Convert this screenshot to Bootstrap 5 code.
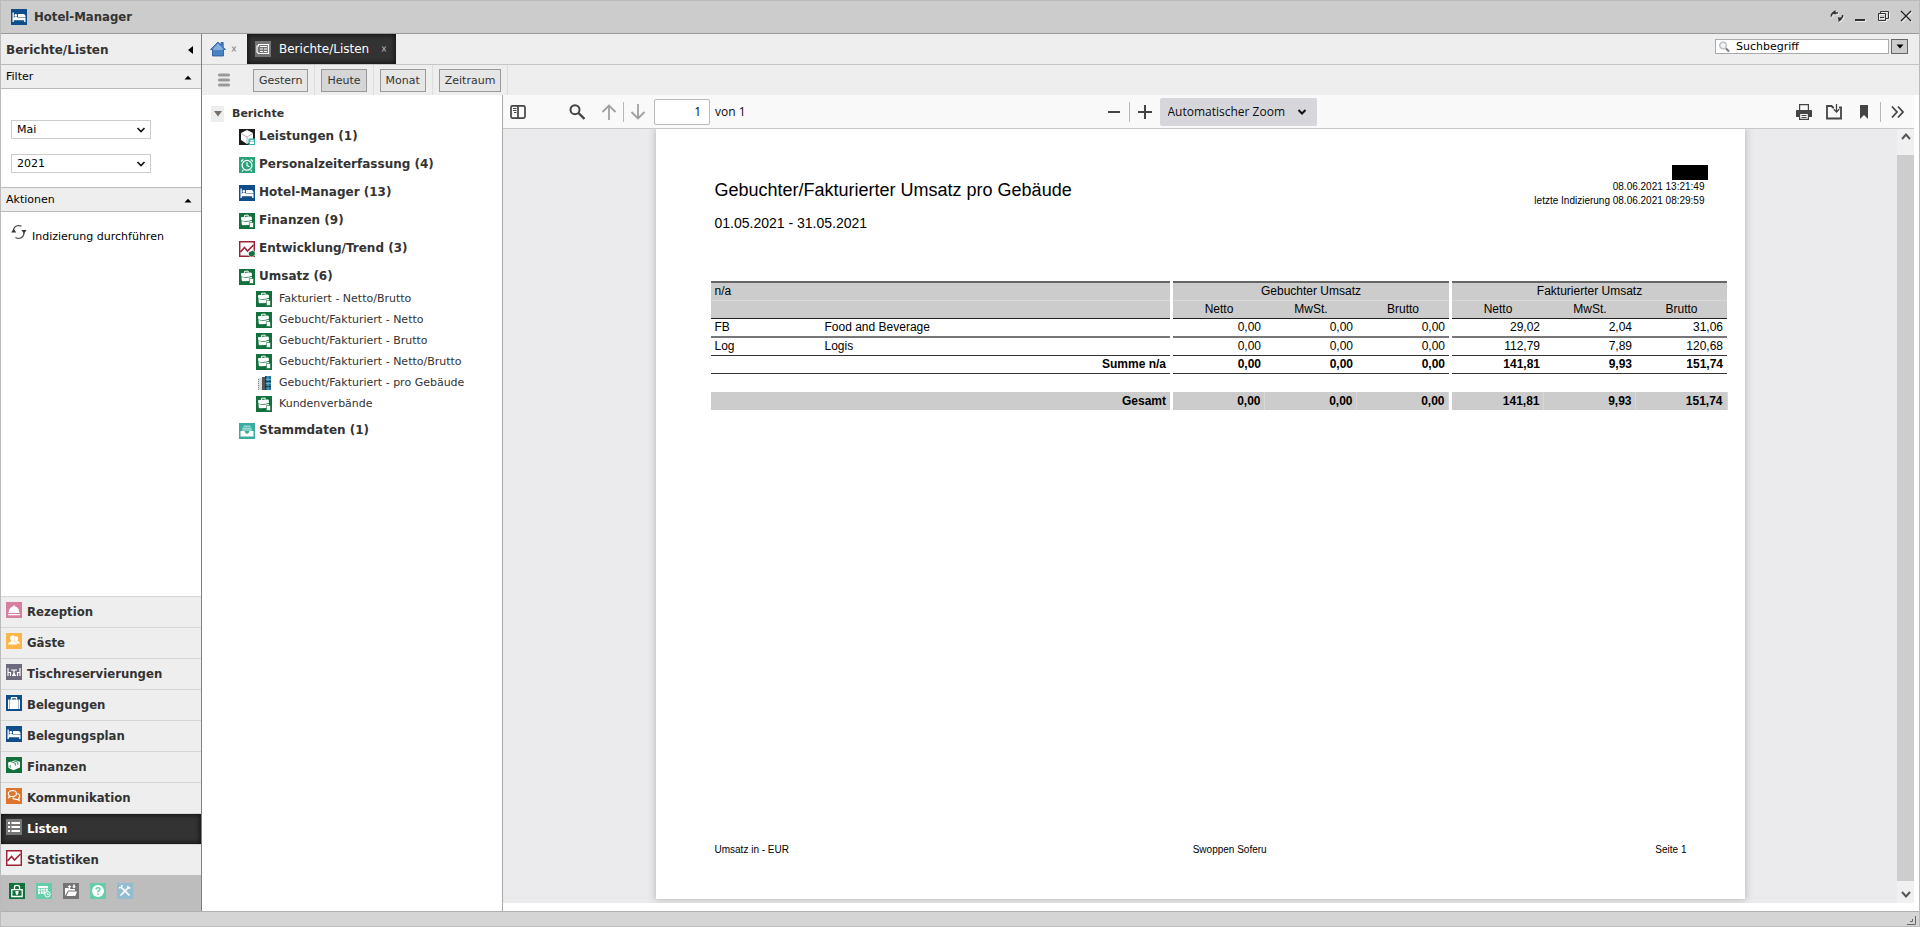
<!DOCTYPE html>
<html lang="de">
<head>
<meta charset="utf-8">
<meta name="viewport" content="width=device-width, initial-scale=1">
<title>Hotel-Manager</title>
<link href="https://cdn.jsdelivr.net/npm/bootstrap@5.3.0/dist/css/bootstrap.min.css" rel="stylesheet">
<style>
  body { font: 11px/14px "DejaVu Sans", sans-serif; color: #000; background: #fff; }
  a { color: inherit; text-decoration: none; }
  button { font: inherit; color: inherit; background: none; border: 0; padding: 0; line-height: 0; }
  svg { display: block; flex: none; }
  .window { height: 100vh; border: 1px solid #bbb; }
  .fill { min-width: 0; min-height: 0; }
  .ico { width: 16px; height: 16px; }

  .titlebar { height: 33px; background: #ccc; border-bottom: 1px solid #999; padding: 0 6px 0 10px; gap: 7px; }
  .titlebar h1, .module { font: bold 13px/16px "DejaVu Sans Condensed", "DejaVu Sans", sans-serif; font-stretch: condensed; color: #333; }
  .titlebar button svg { filter: drop-shadow(1px 1px 0 #eee); }
  .window-tools { gap: 9px; padding-bottom: 3px; }

  .sidebar { width: 201px; flex: none; border-right: 1px solid #808080; }
  .side-title { height: 31px; background: #eee; border-bottom: 1px solid #bbb; padding: 2px 8px 0 5px; font-weight: bold; font-size: 12px; color: #333; }
  .side-head { height: 24px; background: #eee; border-bottom: 1px solid #bbb; padding: 1px 9px 0 5px; }
  .filter { padding: 31px 10px 14px; gap: 15px; border-bottom: 1px solid #bbb; }
  .filter .form-select { width: 140px; height: 19px; padding: 0 20px 0 5px; font-size: 11px; line-height: 14px; color: #000; border: 1px solid #ccc; border-radius: 0;
    background: #fff url("data:image/svg+xml,%3Csvg xmlns='http://www.w3.org/2000/svg' viewBox='0 0 10 8'%3E%3Cpath d='M1.500 2 5 5.500 8.500 2' fill='none' stroke='%23111' stroke-width='1.600'/%3E%3C/svg%3E") no-repeat right 4px center / 10px 8px; }
  .action { padding: 4px 0 0 2px; gap: 5px; }
  .action span { padding-top: 6px; }
  .module { height: 31px; background: #eee; border-top: 1px solid #d6d6d6; padding: 5px 5px 8px; gap: 5px; }
  .module span { padding-top: 2px; }
  .module.active { background: #333; color: #fff; box-shadow: inset 0 0 5px 1px #111; }
  .quickbar { height: 36px; background: #bdbdbd; padding: 8px; gap: 11px; }

  .tabstrip { height: 31px; background: #eee; border-bottom: 1px solid #c6c6c6; }
  .tab-home { padding: 0 9px 0 8px; gap: 4px; }
  .tab-open { height: 30px; width: 149px; background: #333; color: #fff; padding: 0 8px; box-shadow: inset 0 0 5px 1px #111; }
  .tab-open a { font-size: 12px; }
  .search { padding: 5px 11px 0 0; gap: 2px; }
  .find { width: 174px; height: 15px; border: 1px solid #aaa; background: #fff; padding: 0 2px; gap: 6px; }
  .find input { font-size: 11px; line-height: 13px; color: #000; border: 0; padding: 0; height: 13px; outline: 0; }
  .find input::placeholder { color: #000; opacity: 1; }
  .find-menu { width: 17px; height: 15px; background: #ccc; border: 1px solid #666; }

  .rangebar { height: 30px; background: #eee; padding-left: 16px; gap: 17px; }
  .range { padding: 1px 6px 0; border-right: 1px solid #ddd; }
  .range button { height: 23px; padding: 0 5px; border: 1px solid #999; background: #e6e6e6; color: #333; line-height: 21px; }
  .range button.on { background: #d6d6d6; }

  .tree { width: 301px; flex: none; border-right: 1px solid #aaa; color: #333; padding: 10px 0 0 9px; }
  .tree ul { list-style: none; margin: 0; padding: 0; }
  .tree-root { gap: 8px; font-weight: bold; height: 18px; }
  .twisty { width: 13px; height: 16px; background: #eee; }
  .tree .branches { padding-left: 28px; }
  .branch { height: 28px; gap: 4px; padding-top: 6px; font-size: 12px; font-weight: bold; }
  .leaf { height: 21px; gap: 7px; padding: 0 0 0 17px; }
  .leaf span { padding-top: 1px; }

  .viewer-bar { height: 34px; margin-right: 5px; background: #f9f9fa; border-bottom: 1px solid #c8c8c8; font: 12px/16px "Open Sans", sans-serif; color: #0c0c0d; padding: 0 9px 0 7px; }
  .tools { flex: 1 1 0; }
  .tools-nav { gap: 6px; margin-left: 16px; }
  .find-tool { margin-left: 43px; }
  .tools-file { gap: 14px; }
  .rule { width: 1px; height: 20px; background: #b8b8b8; }
  .page-field { gap: 5px; padding-left: 2px; }
  .page-no { width: 56px; height: 26px; border: 1px solid #bbb; border-radius: 2px; text-align: right; padding: 0 8px; background: #fff; }
  .zoom-select { appearance: none; width: 157px; height: 28px; border: 0; border-radius: 2px; padding: 0 20px 0 8px; font: inherit; color: inherit;
    background: #d7d7db url("data:image/svg+xml,%3Csvg xmlns='http://www.w3.org/2000/svg' viewBox='0 0 10 8'%3E%3Cpath d='M1.500 2 5 5.500 8.500 2' fill='none' stroke='%23111' stroke-width='2'/%3E%3C/svg%3E") no-repeat right 10px center / 10px 8px; }
  .viewer-body { background: #ebebed; }
  .sheet { width: 80%; max-width: 1089px; height: 770px; background: #fff; box-shadow: 0 0 7px 1px #bbb; font: 12px/18px "Liberation Sans", sans-serif; color: #000; padding: 36px 17px 42px 55px; }
  .sheet-head { padding: 0 20px 0 4px; height: 116px; }
  .sheet h2 { font-size: 18px; line-height: 22px; font-weight: normal; margin: 14px 0 13px; }
  .period { font-size: 14px; line-height: 18px; }
  .stamp { font-size: 10px; line-height: 14px; text-align: right; padding-right: 3px; }
  .redact { width: 36px; height: 15px; background: #000; }
  .report { width: 100%; table-layout: fixed; border-collapse: collapse; }
  .report td, .report th { height: 18px; line-height: 16px; padding: 0 4px; font-weight: normal; }
  .report .num { text-align: right; }
  .report thead th { background: #ccc; }
  .report thead tr:first-child th { border-top: 2px solid #666; border-bottom: 1px solid #d8d8d8; }
  .report thead tr:last-child th { border-bottom: 1px solid #222; }
  .report tbody td { border-bottom: 1px solid #333; }
  .report tbody tr:first-child td { border-bottom: 2px solid #777; height: 19px; }
  .report .sum td { font-weight: bold; }
  .report tbody .blank td { border: 0; height: 19px; }
  .report .total td { background: #ccc; border: 0; font-weight: bold; }
  .report .total td + td { border-right: 1px solid #d8d8d8; }
  .report tr .gap { background: #fff !important; border: 0 !important; padding: 0; }
  .sheet-foot { display: grid; grid-template-columns: 34fr 38fr 28fr; font-size: 10px; line-height: 14px; padding: 0 41px 0 4px; }

  .scroller { width: 17px; flex: none; background: #f0f0f0; }
  .scroller button { height: 26px; display: flex; justify-content: center; }
  .scroller .down { height: 22px; align-items: flex-end; }
  .thumb { background: #cdcdcd; }
  .margin-strip { width: 5px; background: #fff; }
  .statusbar { height: 15px; background: #d5d5d5; border-top: 1px solid #b0b0b0; padding: 0 2px; }
</style>
<script src="https://cdn.jsdelivr.net/npm/bootstrap@5.3.0/dist/js/bootstrap.bundle.min.js"></script>
</head>
<body>
<svg width="0" height="0" class="position-absolute" aria-hidden="true">
  <symbol id="bed" viewBox="0 0 16 16"><path fill="#104e8b" d="M0 0h16v16H0z"/><path fill="#fff" d="M1.500 3.500h1.300V9H14.500v4h-1.300v-1.700H2.800V13H1.500z"/><circle cx="4.800" cy="6.400" r="1.400" fill="#fff"/><path fill="#fff" d="M7 5h5.500q2 .3 2 2.200V8.500H7zM3.200 8h3.500v1H3.200z"/></symbol>
  <symbol id="case" viewBox="0 0 16 16"><path fill="#11703c" d="M0 0h16v16H0z"/><path fill="#fff" d="M2 4.800Q2 4 3 3.900L11.500 3.400q1.200 0 1.300.9l.2 2.400Q8 9 2.300 7.400zM2.500 8Q7.500 9.400 12.800 7.700L13 9.500 10 12l-6.200.2q-1 0-1.100-1z"/><path d="M5.500 3.800V2.300L9.200 2.100v1.500" fill="none" stroke="#fff"/><path fill="#fff" stroke="#11703c" stroke-width=".6" d="M10.400 9.500h4.100v5h-4.100z"/></symbol>
  <symbol id="cube" viewBox="0 0 16 16"><path fill="#1b1b1b" d="M0 0h16v16H0z"/><path fill="#fff" d="m8 1 6 3v7l-6 4-6-4V4z"/><path fill="none" stroke="#999" stroke-width=".7" d="M2 4.500 8 8l6-3.500M8 8v6"/><path fill="#37b5a5" d="M9.500 9.500H16V16H9.500z"/><path fill="#fff" d="M11 12.500h4V15h-4zM11.500 11h3v1h-3z"/></symbol>
  <symbol id="clock" viewBox="0 0 16 16"><path fill="#2aa37a" d="M0 0h16v16H0z"/><circle cx="8" cy="8.300" r="4.900" fill="none" stroke="#fff" stroke-width="1.300"/><path fill="none" stroke="#fff" stroke-width="1.200" d="M8 5.300v3.200l2.500 1.200M2.200 4.500l2-2.200M13.800 4.500l-2-2.200M4.200 13l-1 1.500M11.800 13l1 1.500"/></symbol>
  <symbol id="trend" viewBox="0 0 16 16"><path fill="#fff" stroke="#9c2235" stroke-width="1.500" d="M.7.7h14.600v14.600H.7z"/><path fill="none" stroke="#9c2235" stroke-width="1.600" d="m1.500 11 4-4.500 3 3.500 6-6"/></symbol>
  <symbol id="tray" viewBox="0 0 16 16"><path fill="#3aada2" d="M0 0h16v16H0z"/><path fill="none" stroke="#c8efe9" d="M4.500 3.200h7M3.500 5.200h9M3 7h10"/><path fill="#fff" d="M1.500 8h4q1 3 2.500 3t2.500-3h4v5.500h-13z"/></symbol>
  <symbol id="tower" viewBox="0 0 16 16"><path fill="#ddd" d="M2 3h5v12H2z"/><path stroke="#888" stroke-dasharray="1 1" d="M2.500 4v11"/><path fill="#555" d="M6 2h3v13H6z"/><path fill="#227397" d="M9 1h6v14H9z"/><path stroke="#7cc3df" stroke-width=".7" d="M9 4.500h6M9 8.500h6M12 1v14"/><path stroke="#123" stroke-width=".7" d="M9.500 1v14M9 6.500h6M9 11.500h6"/></symbol>
  <symbol id="up" viewBox="0 0 8 5"><path d="M.5 4.500h7L4 .7z"/></symbol>
  <symbol id="close" viewBox="0 0 8 8"><path d="M1.500 1.500h1.600L4 3l1-1.500h1.500L4.800 4l1.700 2.500H5L4 5 3 6.500H1.400L3.200 4z" fill="#999"/></symbol>
</svg>

<div class="window d-flex flex-column overflow-hidden">
  <header class="titlebar d-flex align-items-center">
    <svg class="ico"><use href="#bed"/></svg>
    <h1 class="m-0 flex-grow-1">Hotel-Manager</h1>
    <div class="window-tools d-flex align-items-center">
      <button type="button" aria-label="Neu laden"><svg width="14" height="14" viewBox="0 0 14 14"><path d="M1.500 7.500Q.8 4 5 4h3M12.500 6Q13.200 9.500 9 9.500H8" fill="none" stroke="#333" stroke-width="1.600"/><path fill="#333" d="M2 3.500 5.500 1v5zM12 10.500 8.500 13V8z"/></svg></button>
      <button type="button" aria-label="Minimieren"><svg width="14" height="14" viewBox="0 0 14 14"><path fill="#333" d="M2 10h10v2H2z"/></svg></button>
      <button type="button" aria-label="Wiederherstellen"><svg width="14" height="14" viewBox="0 0 14 14"><path fill="none" stroke="#333" d="M4.500 4V2.500h8v7H10M2.500 4.500h7v7h-7zM4 8.500h4"/></svg></button>
      <button type="button" aria-label="Schließen"><svg width="14" height="14" viewBox="0 0 14 14"><path stroke="#222" stroke-width="1.300" d="m2 2 10 10M12 2 2 12"/></svg></button>
    </div>
  </header>

  <div class="fill d-flex flex-grow-1">
    <aside class="sidebar d-flex flex-column">
      <div class="side-title d-flex align-items-center justify-content-between">Berichte/Listen
        <button type="button" aria-label="Einklappen"><svg width="5" height="8" viewBox="0 0 5 8"><path d="M5 0v8L0 4z"/></svg></button></div>
      <div class="side-head d-flex align-items-center justify-content-between">Filter <svg width="8" height="5"><use href="#up"/></svg></div>
      <form class="filter d-flex flex-column">
        <select class="form-select" aria-label="Monat"><option>Mai</option></select>
        <select class="form-select" aria-label="Jahr"><option>2021</option></select>
      </form>
      <div class="side-head d-flex align-items-center justify-content-between">Aktionen <svg width="8" height="5"><use href="#up"/></svg></div>
      <div class="flex-grow-1 p-2">
        <a href="#" class="action d-flex"><svg width="16" height="16" viewBox="0 0 16 16"><path fill="none" stroke="#444" stroke-width="1.200" d="M2.500 7Q2.500 2 7.500 1.500l3 .7M13 8.500q0 5-5 6-2 0-3.500-1"/><path fill="#333" d="M.3 8.500h5L2.500 4.800zM10.500 6h5L13 9.800z"/></svg><span>Indizierung durchführen</span></a>
      </div>
      <nav>
        <a href="#" class="module d-flex"><svg class="ico" viewBox="0 0 16 16"><path fill="#d77fa1" d="M0 0h16v16H0z"/><path fill="#fff" d="M2.500 11q.5-6 5-6.800V3h1v1.200q4.500.8 5 6.800zM2 12h12v1.300H2z"/></svg><span>Rezeption</span></a>
        <a href="#" class="module d-flex"><svg class="ico" viewBox="0 0 16 16"><path fill="#fdb549" d="M0 0h16v16H0z"/><path fill="#fff" d="M4.300 5.500a2.300 2.600 0 1 1 4.400 0q0 2-1 2.900 3.300 1 3.300 3.100H2q0-2.300 3.300-3.100-1-1-1-2.900z"/><path fill="#fff" d="M8.500 3.500q3.500-1.200 3.800 1.800 0 2-1 2.800 2.700.8 2.700 2.600h-2.500Q11 9.300 8.500 8.200z"/></svg><span>Gäste</span></a>
        <a href="#" class="module d-flex"><svg class="ico" viewBox="0 0 16 16"><path fill="#6c6a7c" d="M0 0h16v16H0z"/><path fill="none" stroke="#fff" stroke-width="1.200" d="M2 4v8M2 8.500h2.500V12M14 4v8M14 8.500h-2.500V12M5 6h6M8 6v6M6.500 12l1.500-3 1.500 3"/></svg><span>Tischreservierungen</span></a>
        <a href="#" class="module d-flex"><svg class="ico" viewBox="0 0 16 16"><path fill="#104e8b" d="M0 0h16v16H0z"/><path fill="#fff" d="M4 4.500h8V14H4zM2 5q0-.5.500-.500H3.600V14H2.500Q2 14 2 13.500zM14 5q0-.5-.5-.5H12.400V14h1.100q.5 0 .5-.5z"/><path fill="none" stroke="#fff" stroke-width="1.200" d="M5.500 4.500V2.600h5v1.900"/></svg><span>Belegungen</span></a>
        <a href="#" class="module d-flex"><svg class="ico"><use href="#bed"/></svg><span>Belegungsplan</span></a>
        <a href="#" class="module d-flex"><svg class="ico" viewBox="0 0 16 16"><path fill="#11703c" d="M0 0h16v16H0z"/><path fill="#fff" d="m2 5.500 7-2.300 5 1.500v5.800l-6.500 2.700L2.500 11z"/><path fill="none" stroke="#11703c" stroke-width=".8" d="m5 4.700 4.300 1.500v2.500M7.500 3.800l4.300 1.400v2.600M4.500 8q-1 1 0 2.500"/></svg><span>Finanzen</span></a>
        <a href="#" class="module d-flex"><svg class="ico" viewBox="0 0 16 16"><path fill="#e0742b" d="M0 0h16v16H0z"/><path fill="none" stroke="#fff" stroke-width="1.200" d="M6.500 2.500q4 .3 4 3t-4 3q-.8 0-1.500-.2L2.800 9.500l.5-2Q2.200 6.500 2.300 5.300q.4-2.600 4.200-2.800zM11.500 5.500q2.200.8 2.200 2.700 0 1.300-1 2l.5 2.300-2.500-1.200Q7.500 11.600 6.500 9.500"/></svg><span>Kommunikation</span></a>
        <a href="#" class="module active d-flex" aria-current="page"><svg class="ico" viewBox="0 0 16 16"><path fill="#777" d="M0 0h16v16H0z"/><path fill="#fff" d="M2 3h2v2H2zM5.500 3H14v2H5.500zM2 7h2v2H2zM5.500 7H14v2H5.500zM2 11h2v2H2zM5.500 11H14v2H5.500z"/></svg><span>Listen</span></a>
        <a href="#" class="module d-flex"><svg class="ico"><use href="#trend"/></svg><span>Statistiken</span></a>
      </nav>
      <div class="quickbar d-flex">
        <button type="button" class="ico" aria-label="Sperren"><svg class="ico" viewBox="0 0 16 16"><path fill="#11703c" d="M0 0h16v16H0z"/><path fill="none" stroke="#fff" stroke-width="1.300" d="M5.500 6.500V3.700Q5.500 2.300 8 2.300t2.500 1.400v2.800M2.800 6.700h10.400v6.800H2.800z"/><path fill="#fff" d="M6.500 8h3v2l-1 2h-1l-1-2z"/></svg></button>
        <button type="button" class="ico" aria-label="Kalender"><svg class="ico" viewBox="0 0 16 16"><path fill="#66cdaa" d="M0 0h16v16H0z"/><path fill="#fff" d="M2 3h10v8H2z"/><path stroke="#66cdaa" stroke-width=".7" d="M2 5.500h10M2 8h10M4.500 5v6M7 5v6M9.500 5v6"/><circle cx="11.500" cy="11.300" r="2.700" fill="#66cdaa" stroke="#fff"/><path fill="none" stroke="#fff" stroke-width=".8" d="M11.500 10v1.500H13"/></svg></button>
        <button type="button" class="ico" aria-label="Ordner"><svg class="ico" viewBox="0 0 16 16"><path fill="#747474" d="M0 0h16v16H0z"/><path fill="#fff" d="M2 13V5h3l1 1h6v1.500H5zM5.500 8.500H14L12.300 13H3.500zM6.500 2l2 2H7.300v2H5.700V4H4.500zM11 5.500l-2-2h1.200v-2h1.600v2H13z"/></svg></button>
        <button type="button" class="ico" aria-label="Hilfe"><svg class="ico" viewBox="0 0 16 16"><path fill="#66cdaa" d="M0 0h16v16H0z"/><circle cx="8" cy="8" r="6" fill="#fff"/><path fill="none" stroke="#66cdaa" stroke-width="1.400" d="M6 6.500Q6 4.700 8 4.700t2 1.700Q10 7.500 8 8v1.500M8 10.500V12"/></svg></button>
        <button type="button" class="ico" aria-label="Werkzeuge"><svg class="ico" viewBox="0 0 16 16"><path fill="#93bccf" d="M0 0h16v16H0z"/><path fill="none" stroke="#fff" stroke-width="1.700" d="m4 4 8.500 8.500M12 4l-8.500 8.500"/><path fill="none" stroke="#fff" stroke-width="1.500" d="M2 4.500q2.500.8 3-2.500M11 3q-.5 2.500 2.500 2"/></svg></button>
      </div>
    </aside>

    <main class="fill d-flex flex-column flex-grow-1">
      <div class="tabstrip d-flex">
        <div class="tab-home d-flex align-items-center">
          <a href="#" aria-label="Start"><svg class="ico" viewBox="0 0 16 16"><path fill="#4a83c4" stroke="#24579a" stroke-width=".8" d="M8 1 11 4V1.500h2.200V6.200L15.500 8.500H13.500V15h-11V8.500H.5z"/><path fill="#9cc2ea" d="m8 2.500 4.500 4.700V9h-9V7.200z" opacity=".7"/></svg></a>
          <button type="button" aria-label="Start schließen"><svg width="8" height="8"><use href="#close"/></svg></button>
        </div>
        <div class="tab-open d-flex align-items-center">
          <svg class="ico" viewBox="0 0 16 16"><path fill="#747474" d="M0 0h16v16H0z"/><path fill="none" stroke="#fff" stroke-width="1.200" d="M3.500 3.500h10v9h-10L2 11V5h1.500z"/><path stroke="#fff" d="M5 5.500h7M5 8h3M9 8h3M5 10.500h3M9 10.500h3"/></svg>
          <a href="#" class="ms-2 flex-grow-1" aria-current="page">Berichte/Listen</a>
          <button type="button" aria-label="Tab schließen"><svg width="8" height="8"><use href="#close"/></svg></button>
        </div>
        <div class="search d-flex ms-auto">
          <label class="find d-flex align-items-center"><svg width="12" height="12" viewBox="0 0 12 12"><circle cx="5" cy="4.500" r="3.300" fill="#edf3f7" stroke="#bbb" stroke-width="1.300"/><path stroke="#777" stroke-width="2" d="m8 7.500 3 3"/></svg><input class="w-100" type="text" placeholder="Suchbegriff" aria-label="Suchbegriff"></label>
          <button type="button" class="find-menu d-flex align-items-center justify-content-center" aria-label="Suchoptionen"><svg width="8" height="5" viewBox="0 0 8 5"><path d="M.5.5h7L4 4.500z"/></svg></button>
        </div>
      </div>

      <div class="rangebar d-flex align-items-center">
        <button type="button" aria-label="Menü"><svg width="12" height="14" viewBox="0 0 12 14"><path stroke="#999" stroke-width="3" stroke-linecap="round" d="M1.500 2h9M1.500 7h9M1.500 12h9"/></svg></button>
        <div class="d-flex align-self-stretch">
          <div class="range d-flex align-items-center"><button type="button">Gestern</button></div>
          <div class="range d-flex align-items-center"><button type="button" class="on">Heute</button></div>
          <div class="range d-flex align-items-center"><button type="button">Monat</button></div>
          <div class="range d-flex align-items-center"><button type="button">Zeitraum</button></div>
        </div>
      </div>

      <div class="fill d-flex flex-grow-1">
        <nav class="tree">
          <div class="tree-root d-flex align-items-center"><button type="button" class="twisty d-flex align-items-center justify-content-center" aria-label="Berichte einklappen"><svg width="8" height="6" viewBox="0 0 8 6"><path fill="#777067" d="M0 0h8L4 5.500z"/></svg></button><a href="#">Berichte</a></div>
          <ul class="branches">
            <li><a href="#" class="branch d-flex"><svg class="ico"><use href="#cube"/></svg><span>Leistungen (1)</span></a></li>
            <li><a href="#" class="branch d-flex"><svg class="ico"><use href="#clock"/></svg><span>Personalzeiterfassung (4)</span></a></li>
            <li><a href="#" class="branch d-flex"><svg class="ico"><use href="#bed"/></svg><span>Hotel-Manager (13)</span></a></li>
            <li><a href="#" class="branch d-flex"><svg class="ico"><use href="#case"/></svg><span>Finanzen (9)</span></a></li>
            <li><a href="#" class="branch d-flex"><svg class="ico" viewBox="0 0 16 16"><use href="#trend"/><path fill="#11703c" stroke="#fff" stroke-width=".6" d="m9.500 11 4-1.500 2.500 1v4L12.500 16l-3-1.500z"/></svg><span>Entwicklung/Trend (3)</span></a></li>
            <li><a href="#" class="branch d-flex"><svg class="ico"><use href="#case"/></svg><span>Umsatz (6)</span></a>
              <ul>
                <li><a href="#" class="leaf d-flex"><svg class="ico"><use href="#case"/></svg><span>Fakturiert - Netto/Brutto</span></a></li>
                <li><a href="#" class="leaf d-flex"><svg class="ico"><use href="#case"/></svg><span>Gebucht/Fakturiert - Netto</span></a></li>
                <li><a href="#" class="leaf d-flex"><svg class="ico"><use href="#case"/></svg><span>Gebucht/Fakturiert - Brutto</span></a></li>
                <li><a href="#" class="leaf d-flex"><svg class="ico"><use href="#case"/></svg><span>Gebucht/Fakturiert - Netto/Brutto</span></a></li>
                <li><a href="#" class="leaf d-flex"><svg class="ico"><use href="#tower"/></svg><span>Gebucht/Fakturiert - pro Gebäude</span></a></li>
                <li><a href="#" class="leaf d-flex"><svg class="ico"><use href="#case"/></svg><span>Kundenverbände</span></a></li>
              </ul></li>
            <li><a href="#" class="branch d-flex"><svg class="ico"><use href="#tray"/></svg><span>Stammdaten (1)</span></a></li>
          </ul>
        </nav>

        <section class="fill d-flex flex-column flex-grow-1">
          <div class="viewer-bar d-flex align-items-center">
            <div class="tools d-flex align-items-center">
              <button type="button" aria-label="Seitenleiste"><svg class="ico" viewBox="0 0 16 16"><path fill="none" stroke="#444" stroke-width="1.700" d="M2.500 1.900h11q1.500 0 1.500 1.500v9.200q0 1.500-1.500 1.500h-11Q1 14.100 1 12.600V3.400q0-1.500 1.500-1.500zM8 2v12"/><path stroke="#444" d="M3 4.500h3.500M3 6.500h3.500M4 8.500h2.500"/></svg></button>
              <button type="button" class="find-tool" aria-label="Suchen"><svg class="ico" viewBox="0 0 16 16"><circle cx="6" cy="5.700" r="4.500" fill="none" stroke="#444" stroke-width="2"/><path stroke="#444" stroke-width="2.400" d="m9.500 9 6 6"/></svg></button>
              <div class="tools-nav d-flex align-items-center">
                <button type="button" aria-label="Vorherige Seite"><svg class="ico" viewBox="0 0 16 16"><path fill="none" stroke="#a0a0a0" stroke-width="1.800" d="M8 16V1.500M1.500 8 8 1.500 14.500 8"/></svg></button>
                <span class="rule"></span>
                <button type="button" aria-label="Nächste Seite"><svg class="ico" viewBox="0 0 16 16"><path fill="none" stroke="#a0a0a0" stroke-width="1.800" d="M8 0v14.500M1.500 8 8 14.500 14.500 8"/></svg></button>
                <div class="page-field d-flex align-items-center"><input class="page-no" id="pageNo" type="text" value="1"><label for="pageNo">von 1</label></div>
              </div>
            </div>
            <div class="d-flex align-items-center gap-2 ms-2">
              <button type="button" aria-label="Verkleinern"><svg width="14" height="16" viewBox="0 0 14 16"><path fill="#444" d="M1 7h12v2H1z"/></svg></button>
              <span class="rule"></span>
              <button type="button" aria-label="Vergrößern"><svg width="14" height="16" viewBox="0 0 14 16"><path fill="#444" d="M0 7h6V1h2v6h6v2H8v6H6V9H0z"/></svg></button>
              <select class="zoom-select" aria-label="Zoom"><option>Automatischer Zoom</option></select>
            </div>
            <div class="tools tools-file d-flex align-items-center justify-content-end">
              <button type="button" aria-label="Drucken"><svg class="ico" viewBox="0 0 16 16"><path fill="#444" d="M0 7q0-1 1-1h14q1 0 1 1v6h-3v-3H3v3H0z"/><path fill="none" stroke="#444" stroke-width="1.200" d="M3.600 6V.7h8.800V6M3.600 10v5.300h8.800V10M5.500 11.500h5M5.500 13.500h5"/></svg></button>
              <button type="button" aria-label="Speichern"><svg class="ico" viewBox="0 0 16 16"><path fill="none" stroke="#444" stroke-width="1.800" d="M8 3.500H7L5.500 2H1v12.500h14V3.500h-2"/><path fill="none" stroke="#444" stroke-width="1.300" d="M10.500 0v8M7.800 5.300l2.700 2.700 2.700-2.700"/></svg></button>
              <div class="d-flex align-items-center gap-2">
                <button type="button" aria-label="Lesezeichen"><svg class="ico" viewBox="0 0 16 16"><path fill="#444" d="M4 1h8v14l-4-4-4 4z"/></svg></button>
                <span class="rule"></span>
                <button type="button" aria-label="Mehr"><svg class="ico" viewBox="0 0 16 16"><path fill="none" stroke="#444" stroke-width="1.800" d="m3 2.500 5 5.500-5 5.500M9 2.500 14 8l-5 5.500"/></svg></button>
              </div>
            </div>
          </div>

          <div class="viewer-body fill d-flex flex-grow-1 mb-2">
            <div class="flex-grow-1 overflow-hidden d-flex justify-content-center">
              <article class="sheet d-flex flex-column">
                <header class="sheet-head d-flex justify-content-between">
                  <div><h2>Gebuchter/Fakturierter Umsatz pro Gebäude</h2><div class="period">01.05.2021 - 31.05.2021</div></div>
                  <div class="d-flex flex-column align-items-end"><div class="redact"></div><div class="stamp">08.06.2021 13:21:49<br>letzte Indizierung 08.06.2021 08:29:59</div></div>
                </header>
                <table class="report">
                  <colgroup><col style="width:110px"><col><col style="width:3px"><col style="width:92px"><col style="width:92px"><col style="width:92px"><col style="width:3px"><col style="width:92px"><col style="width:92px"><col style="width:91px"></colgroup>
                  <thead>
                    <tr><th colspan="2">n/a</th><th class="gap"></th><th colspan="3" class="text-center">Gebuchter Umsatz</th><th class="gap"></th><th colspan="3" class="text-center">Fakturierter Umsatz</th></tr>
                    <tr class="text-center"><th colspan="2"></th><th class="gap"></th><th>Netto</th><th>MwSt.</th><th>Brutto</th><th class="gap"></th><th>Netto</th><th>MwSt.</th><th>Brutto</th></tr>
                  </thead>
                  <tbody>
                    <tr><td>FB</td><td>Food and Beverage</td><td class="gap"></td><td class="num">0,00</td><td class="num">0,00</td><td class="num">0,00</td><td class="gap"></td><td class="num">29,02</td><td class="num">2,04</td><td class="num">31,06</td></tr>
                    <tr><td>Log</td><td>Logis</td><td class="gap"></td><td class="num">0,00</td><td class="num">0,00</td><td class="num">0,00</td><td class="gap"></td><td class="num">112,79</td><td class="num">7,89</td><td class="num">120,68</td></tr>
                    <tr class="sum"><td colspan="2" class="num">Summe n/a</td><td class="gap"></td><td class="num">0,00</td><td class="num">0,00</td><td class="num">0,00</td><td class="gap"></td><td class="num">141,81</td><td class="num">9,93</td><td class="num">151,74</td></tr>
                    <tr class="blank"><td colspan="10"></td></tr>
                    <tr class="total"><td colspan="2" class="num">Gesamt</td><td class="gap"></td><td class="num">0,00</td><td class="num">0,00</td><td class="num">0,00</td><td class="gap"></td><td class="num">141,81</td><td class="num">9,93</td><td class="num">151,74</td></tr>
                  </tbody>
                </table>
                <footer class="sheet-foot mt-auto"><span>Umsatz in - EUR</span><span class="text-center">Swoppen Soferu</span><span class="text-end">Seite 1</span></footer>
              </article>
            </div>
            <div class="scroller d-flex flex-column">
              <button type="button" aria-label="Nach oben"><svg width="10" height="14" viewBox="0 0 10 14"><path fill="none" stroke="#555" stroke-width="2" d="M1 10 5 5.500 9 10"/></svg></button>
              <div class="thumb flex-grow-1"></div>
              <button type="button" class="down" aria-label="Nach unten"><svg width="10" height="14" viewBox="0 0 10 14"><path fill="none" stroke="#555" stroke-width="2" d="M1 3 5 7.500 9 3"/></svg></button>
            </div>
            <div class="margin-strip"></div>
          </div>
        </section>
      </div>
    </main>
  </div>
  <footer class="statusbar d-flex justify-content-end align-items-end"><svg width="10" height="10" viewBox="0 0 10 10"><path fill="none" stroke="#666" d="M8.500 0v8.500H0M5.500 3v2.500H3"/></svg></footer>
</div>
</body>
</html>
